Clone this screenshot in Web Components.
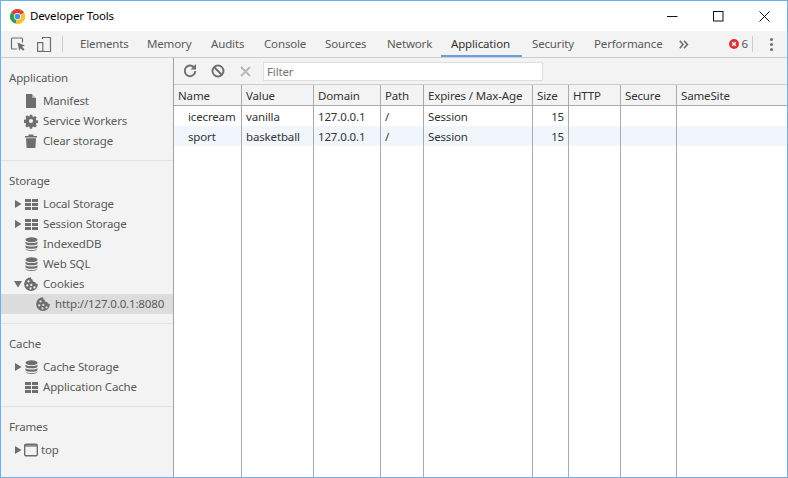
<!DOCTYPE html>
<html><head><meta charset="utf-8"><title>Developer Tools</title>
<style>
html,body{margin:0;padding:0;width:788px;height:478px;overflow:hidden;background:#fff}
body{font:11.5px/16px "Noto Sans","Open Sans",sans-serif;letter-spacing:-.15px;color:#333}
</style></head><body>
<dt-window>
  <dt-titlebar>Developer Tools</dt-titlebar>
  <dt-tabs></dt-tabs>
  <dt-body>
    <dt-sidebar></dt-sidebar>
    <dt-main></dt-main>
  </dt-body>
</dt-window>
<script>
const ICONS={
 file:'<path d="M2 0h6l4 4v10H2z" fill="#6e6e6e"/><path d="M8.300 0v3.700H12z" fill="#f3f3f3" opacity=".7"/>',
 gear:'<path fill="#6e6e6e" fill-rule="evenodd" d="M5.700 0h2.600l.4 2 1.200.5 1.700-1.100 1.800 1.800-1.100 1.700.5 1.200 2 .4v2.600l-2 .4-.5 1.200 1.100 1.700-1.800 1.800-1.700-1.100-1.200.5-.4 2H5.700l-.4-2-1.200-.5-1.700 1.100-1.800-1.800 1.100-1.700-.5-1.200-2-.4V5.700l2-.4.5-1.200L.9 2.400l1.800-1.800L4.400 1.700 5.300 2zM7 4.700a2.300 2.300 0 1 0 0 4.600 2.300 2.300 0 0 0 0-4.600z" transform="translate(.7 .7) scale(.9)"/>',
 trash:'<path fill="#6e6e6e" d="M1 2h12v1.500H1zM4.500.5h5V2h-5zM2 4.300h10l-.6 9.700H2.600z"/>',
 grid:'<path fill="#6e6e6e" d="M0 1h6v3H0zM7 1h6v3H7zM0 5h6v3H0zM7 5h6v3H7zM0 9h6v3H0zM7 9h6v3H7z" transform="translate(1 1)"/>',
 db:'<g fill="#6e6e6e"><ellipse cx="7.500" cy="2.800" rx="6" ry="2.500"/><path d="M1.500 4.500c1 2 11 2 12 0v2.200c-1 2-11 2-12 0zM1.500 8c1 2 11 2 12 0v2.200c-1 2-11 2-12 0zM1.500 11.500c1 2 11 2 12 0v.5c-1 2.600-11 2.600-12 0z"/></g>',
 cookie:'<path fill-rule="evenodd" fill="#6e6e6e" d="M7 .2a6.900 6.900 0 1 0 6.900 6.900c-1.500.2-2.500-.8-2.700-2C9.800 5.200 8.500 4.200 8.600 2.800 7.600 2.600 7 1.500 7 .2zM4.500 3.300a1.100 1.100 0 1 1 0 2.200 1.100 1.100 0 0 1 0-2.200zM3.300 7.300a1.100 1.100 0 1 1 0 2.200 1.100 1.100 0 0 1 0-2.200zM7.300 6.800a1.100 1.100 0 1 1 0 2.200 1.100 1.100 0 0 1 0-2.200zM6.500 10.300a1.100 1.100 0 1 1 0 2.200 1.100 1.100 0 0 1 0-2.200zM10.500 9.300a1.100 1.100 0 1 1 0 2.200 1.100 1.100 0 0 1 0-2.200z"/>',
 frame:'<rect x=".7" y="1.200" width="12.600" height="11.600" rx="1.400" fill="none" stroke="#6e6e6e" stroke-width="1.400"/><path d="M1 2.200h12v1.400H1z" fill="#6e6e6e"/>'
};
function define(name,css,html){
  customElements.define(name,class extends HTMLElement{
    constructor(){super();const r=this.attachShadow({mode:'open'});r.innerHTML='<style>'+css+'</style>'+(typeof html==='function'?html(this):html);}
  });
}
define('dt-window',':host{display:flex;flex-direction:column;width:788px;height:478px;box-sizing:border-box;border:1px solid #6eb0e8;background:#fff}','<slot></slot>');
define('dt-titlebar',`
:host{display:flex;align-items:center;height:30px;flex:none;background:#fff;color:#000}
.logo{margin:0 5px 0 9px;width:15px;height:15px}
.t{flex:1}
.b{width:46px;height:30px;display:flex;align-items:center;justify-content:center}
`,`<svg class="logo" viewBox="0 0 16 16"><path d="M8 8 15 4A8 8 0 0 0 1.070 4z" fill="#db4437"/><path d="M8 8 1.070 4A8 8 0 0 0 6 15.750z" fill="#2e9e4f"/><path d="M8 8 6 15.750A8 8 0 0 0 15 4z" fill="#fbc02d"/><circle cx="8" cy="8" r="3.800" fill="#fff"/><circle cx="8" cy="8" r="3" fill="#4a8ff0"/></svg>
<span class="t"><slot></slot></span>
<span class="b"><svg width="11" height="11"><path d="M0 5.500h10.500" stroke="#111" stroke-width="1"/></svg></span>
<span class="b"><svg width="11" height="11"><rect x=".5" y=".5" width="9.500" height="9.500" fill="none" stroke="#111"/></svg></span>
<span class="b"><svg width="11" height="11"><path d="M.5.500l10 10M10.500.500l-10 10" stroke="#111" stroke-width="1" fill="none"/></svg></span>`);
define('dt-tab',`
:host{display:flex;align-items:center;flex:none;height:26px;box-sizing:border-box;padding-left:10px;color:#5a5a5a;white-space:nowrap}
:host([active]){color:#333;box-shadow:inset 0 -2px 0 #6a9ee0}
`,'<slot></slot>');
define('dt-tabs',`
:host{display:flex;align-items:center;height:27px;flex:none;box-sizing:border-box;background:#f3f3f3;border-bottom:1px solid #ccc;padding-left:9px}
.ic{display:block;margin-right:11px}
.sep{width:1px;height:16px;background:#ccc;margin:0 7px 0 1px}
.more{margin:0 0 0 9px}
.sp{flex:1}
.err{display:flex;align-items:center;gap:3px;color:#5a5a5a;margin-right:4px}
.dots{margin:0 14px 0 17px}
`,`<svg class="ic" width="16" height="16" viewBox="0 0 16 16"><path d="M7 13H2.500A1 1 0 0 1 1.500 12V3A1 1 0 0 1 2.500 2h9a1 1 0 0 1 1 1v3.500" fill="none" stroke="#6e6e6e" stroke-width="1.200"/><path d="M7.500 6.500l7.500 3-3 1.300 2.500 2.500-1.500 1.500-2.500-2.500-1.300 2.800z" fill="#6e6e6e"/></svg>
<svg class="ic" style="margin-right:9px" width="15" height="16" viewBox="0 0 15 16"><path fill="none" stroke="#6e6e6e" stroke-width="1.200" d="M5.500 3V1.500h8V15.500H5.500"/><rect x=".6" y="6.600" width="5.200" height="8.800" fill="none" stroke="#6e6e6e" stroke-width="1.200"/></svg>
<span class="sep"></span>
<dt-tab style="width:67px">Elements</dt-tab><dt-tab style="width:64px">Memory</dt-tab><dt-tab style="width:53px">Audits</dt-tab><dt-tab style="width:61px">Console</dt-tab><dt-tab style="width:62px">Sources</dt-tab><dt-tab style="width:64px">Network</dt-tab><dt-tab active style="width:81px">Application</dt-tab><dt-tab style="width:62px">Security</dt-tab><dt-tab style="width:86px">Performance</dt-tab>
<svg class="more" width="10" height="9" viewBox="0 0 10 9"><path d="M.8.800 4 4.500.8 8.200M5 .800 8.400 4.500 5 8.200" fill="none" stroke="#6e6e6e" stroke-width="1.600"/></svg>
<span class="sp"></span>
<span class="err"><svg width="10" height="10" viewBox="0 0 10 10"><circle cx="5" cy="5" r="5" fill="#d9343b"/><path d="M3.200 3.200l3.600 3.600M6.800 3.200 3.200 6.800" stroke="#fff" stroke-width="1.300"/></svg>6</span>
<span class="sep" style="margin:0"></span>
<svg class="dots" width="3" height="13" viewBox="0 0 3 13"><g fill="#6e6e6e"><circle cx="1.500" cy="1.500" r="1.500"/><circle cx="1.500" cy="6.500" r="1.500"/><circle cx="1.500" cy="11.500" r="1.500"/></g></svg>`);
define('dt-body',':host{display:flex;flex:1;min-height:0}','<slot></slot>');
define('dt-section',`
:host{display:block;box-sizing:border-box;padding:9px 0 9px;border-bottom:1px solid #e2e2e2}
:host(:first-child){padding-top:10px}
:host(:last-child){border-bottom:0}
h3{margin:0 0 4px 8px;font:inherit;color:#5a5a5a;height:20px;line-height:22px}
:host(:first-child) h3{line-height:20px}
`,h=>`<h3>${h.getAttribute('title')}</h3><slot></slot>`);
define('dt-item',`
:host{display:flex;align-items:center;height:20px;color:#5a5a5a;white-space:nowrap}
:host([selected]){background:#dcdcdc}
.a{width:9px;height:8px;margin-left:13px;flex:none}
.i{width:14px;height:14px;flex:none;margin-left:1px;margin-right:5px;overflow:visible}
:host([deep]) .a{margin-left:25px}
`,h=>{const ar=h.getAttribute('arrow');
 const a=ar==='r'?'<path d="M1 0l6.500 4L1 8z" fill="#6e6e6e"/>':ar==='d'?'<path d="M0 1h8L4 7.500z" fill="#6e6e6e"/>':'';
 return `<svg class="a" viewBox="0 0 9 8">${a}</svg><svg class="i" viewBox="0 0 14 14">${ICONS[h.getAttribute('icon')]}</svg><slot></slot>`});
define('dt-sidebar',`
:host{display:block;width:173px;box-sizing:border-box;flex:none;background:#f3f3f3;border-right:1px solid #a3a3a3;overflow:hidden}
`,`<dt-section title="Application"><dt-item icon="file">Manifest</dt-item><dt-item icon="gear">Service Workers</dt-item><dt-item icon="trash">Clear storage</dt-item></dt-section>
<dt-section title="Storage"><dt-item arrow="r" icon="grid">Local Storage</dt-item><dt-item arrow="r" icon="grid">Session Storage</dt-item><dt-item icon="db">IndexedDB</dt-item><dt-item icon="db">Web SQL</dt-item><dt-item arrow="d" icon="cookie">Cookies</dt-item><dt-item deep selected icon="cookie">http://127.0.0.1:8080</dt-item></dt-section>
<dt-section title="Cache"><dt-item arrow="r" icon="db">Cache Storage</dt-item><dt-item icon="grid">Application Cache</dt-item></dt-section>
<dt-section title="Frames"><dt-item arrow="r" icon="frame"><span style="margin-left:-2px">top</span></dt-item></dt-section>`);
define('dt-main',`
:host{display:flex;flex-direction:column;flex:1;min-width:0}
.bar{display:flex;align-items:center;height:27px;box-sizing:border-box;background:#f3f3f3;border-bottom:1px solid #ccc;flex:none;padding-left:9px;gap:14px}
.f{width:280px;height:19px;box-sizing:border-box;border:1px solid #ddd;background:#fff;color:#757575;padding:0 3px;line-height:17px;margin-left:-3px}
`,`<div class="bar">
<svg width="14" height="14" viewBox="0 0 14 14"><path d="M11.600 4.200A5.300 5.300 0 1 0 12.300 7" fill="none" stroke="#6e6e6e" stroke-width="1.900"/><path d="M13 0v5.500H7.500z" fill="#6e6e6e"/></svg>
<svg width="14" height="14" viewBox="0 0 14 14"><circle cx="7" cy="7" r="5.500" fill="none" stroke="#6e6e6e" stroke-width="1.900"/><path d="M3 3l8 8" stroke="#6e6e6e" stroke-width="1.900"/></svg>
<svg width="11" height="11" viewBox="0 0 11 11" style="margin-left:1px;margin-right:1px"><path d="M1 1l9 9M10 1l-9 9" stroke="#b8b8b8" stroke-width="1.900"/></svg>
<div class="f">Filter</div></div>
<dt-table></dt-table>`);
define('dt-table',`
:host{display:grid;flex:1;min-height:0;grid-template-columns:68px 72px 67px 43px 109px 36px 52px 56px 1fr;grid-template-rows:21px 20px 20px 1fr;color:#333;white-space:nowrap}
.c{box-sizing:border-box;border-right:1px solid #aaa;padding:0 4px;line-height:21px;overflow:hidden}
.c:nth-child(9n+1){border-right:0}
.h{background:#f3f3f3;border-bottom:1px solid #aaa;height:21px;line-height:21px}
.r{text-align:right}
.n{padding-left:14px}
.s{background:#f1f6fd}
`,()=>{
 const head=['Name','Value','Domain','Path','Expires / Max-Age','Size','HTTP','Secure','SameSite'];
 const rows=[['icecream','vanilla','127.0.0.1','/','Session','15'],['sport','basketball','127.0.0.1','/','Session','15']];
 let s=head.map(t=>`<div class="c h">${t}</div>`).join('');
 rows.forEach((r,i)=>{for(let k=0;k<9;k++){const cl=['c'];if(i)cl.push('s');if(k===0)cl.push('n');if(k===5)cl.push('r');s+=`<div class="${cl.join(' ')}">${r[k]||''}</div>`}});
 for(let k=0;k<9;k++)s+='<div class="c"></div>';
 return s;
});
</script>
</body></html>
